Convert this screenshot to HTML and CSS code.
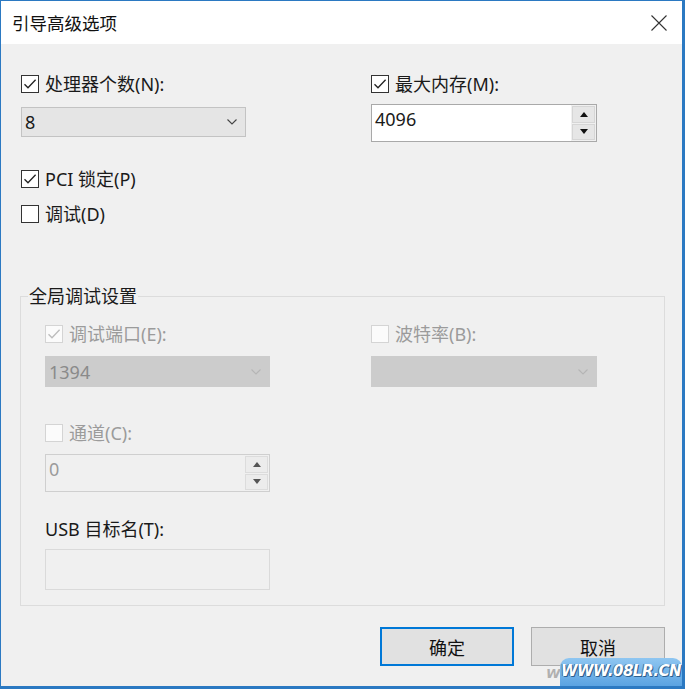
FILE: index.html
```html
<!DOCTYPE html>
<html lang="zh-CN">
<head>
<meta charset="utf-8">
<title>引导高级选项</title>
<link rel="stylesheet" href="styles.css">
</head>
<body>
<div class="window">
  <div class="titlebar">
    <span class="title">引导高级选项</span>
    <svg class="close" viewBox="0 0 16 16"><path d="M0.5 0.5L15.5 15.5M15.5 0.5L0.5 15.5" stroke="#333" stroke-width="1.1" fill="none"/></svg>
  </div>

  <div class="content">
    <div class="top-grid">
      <div class="col">
        <label class="check"><span class="box"><svg viewBox="0 0 14 14"><path d="M1.5 7.2L5 10.8L12.6 2.8" stroke="#222" stroke-width="1.3" fill="none"/></svg></span>处理器个数(N):</label>
        <div class="select sel-proc"><span>8</span><svg class="chev" viewBox="0 0 10 6"><path d="M0.5 0.5L5 5L9.5 0.5" stroke="#444" stroke-width="1.1" fill="none"/></svg></div>
        <label class="check pci"><span class="box"><svg viewBox="0 0 14 14"><path d="M1.5 7.2L5 10.8L12.6 2.8" stroke="#222" stroke-width="1.3" fill="none"/></svg></span>PCI 锁定(P)</label>
        <label class="check dbg"><span class="box"></span>调试(D)</label>
      </div>
      <div class="col">
        <label class="check"><span class="box"><svg viewBox="0 0 14 14"><path d="M1.5 7.2L5 10.8L12.6 2.8" stroke="#222" stroke-width="1.3" fill="none"/></svg></span>最大内存(M):</label>
        <div class="spin spin-mem">
          <span class="val">4096</span>
          <div class="btns">
            <span class="sbtn"><svg viewBox="0 0 8 5"><path d="M4 0L8 5H0Z" fill="#111"/></svg></span>
            <span class="sbtn"><svg viewBox="0 0 8 5"><path d="M0 0H8L4 5Z" fill="#111"/></svg></span>
          </div>
        </div>
      </div>
    </div>

    <fieldset class="group">
      <legend>全局调试设置</legend>
      <div class="group-inner">
        <div class="group-top">
          <div class="col">
            <label class="check disabled"><span class="box"><svg viewBox="0 0 14 14"><path d="M1.5 7.2L5 10.8L12.6 2.8" stroke="#bcbcbc" stroke-width="1.3" fill="none"/></svg></span>调试端口(E):</label>
            <div class="select dis sel-g"><span>1394</span><svg class="chev" viewBox="0 0 10 6"><path d="M0.5 0.5L5 5L9.5 0.5" stroke="#b5b5b5" stroke-width="1.1" fill="none"/></svg></div>
          </div>
          <div class="col">
            <label class="check disabled"><span class="box"></span>波特率(B):</label>
            <div class="select dis sel-g"><span></span><svg class="chev" viewBox="0 0 10 6"><path d="M0.5 0.5L5 5L9.5 0.5" stroke="#b5b5b5" stroke-width="1.1" fill="none"/></svg></div>
          </div>
        </div>
        <div class="col left-only">
          <label class="check disabled chan"><span class="box"></span>通道(C):</label>
          <div class="spin dis spin-chan">
            <span class="val">0</span>
            <div class="btns">
              <span class="sbtn"><svg viewBox="0 0 8 5"><path d="M4 0L8 5H0Z" fill="#555"/></svg></span>
              <span class="sbtn"><svg viewBox="0 0 8 5"><path d="M0 0H8L4 5Z" fill="#555"/></svg></span>
            </div>
          </div>
          <div class="field-label">USB 目标名(T):</div>
          <div class="textbox"></div>
        </div>
      </div>
    </fieldset>

    <div class="buttons">
      <button class="btn primary">确定</button>
      <button class="btn">取消</button>
    </div>
  </div>

  <span class="wm-ghost">W</span>
  <div class="watermark">WWW.08LR.CN</div>
</div>
</body>
</html>
```

FILE: styles.css
```css
* { box-sizing: border-box; }
html, body { margin: 0; padding: 0; }
body {
  width: 685px;
  height: 689px;
  font-family: "Noto Sans", "Noto Sans CJK SC", sans-serif;
  font-size: 18px;
  color: #1a1a1a;
  overflow: hidden;
}
.window {
  position: relative;
  width: 685px;
  height: 689px;
  background: #f0f0f0;
  border-style: solid;
  border-color: #2b79c2;
  border-width: 1px 3px 3px 1px;
  overflow: hidden;
}
.titlebar {
  height: 43px;
  background: #fff;
  display: flex;
  align-items: center;
  justify-content: space-between;
  padding: 0 15px 0 11px;
}
.title { font-size: 17.5px; line-height: 22px; color: #111; }
.close { width: 16px; height: 16px; display: block; }

.content { padding: 30px 17px 0 19px; }

.top-grid {
  display: grid;
  grid-template-columns: 225px 226px;
  column-gap: 125px;
  padding-left: 1px;
}
.col { display: flex; flex-direction: column; }

.check {
  display: flex;
  align-items: center;
  gap: 6px;
  height: 20px;
  line-height: 20px;
  white-space: nowrap;
  color: #1a1a1a;
}
.box {
  flex: none;
  width: 18px;
  height: 18px;
  border: 1px solid #333;
  background: #fff;
  display: flex;
  align-items: center;
  justify-content: center;
}
.box svg { width: 14px; height: 14px; display: block; }
.check.disabled { color: #9b9b9b; }
.check.disabled .box { border-color: #d4d4d4; background: #fbfbfb; }

.select {
  display: flex;
  align-items: center;
  justify-content: space-between;
  background: #e5e5e5;
  border: 1px solid #c3c3c3;
  padding: 0 8px 0 3px;
  line-height: 20px;
}
.select .chev { width: 10px; height: 6px; display: block; }
.sel-proc { margin-top: 13px; height: 30px; }
.select.dis { background: #cccccc; border-color: #cccccc; color: #8a8a8a; }
.sel-g { margin-top: 12px; height: 31px; }

.pci { margin-top: 32px; }
.dbg { margin-top: 15px; }

.spin {
  display: flex;
  align-items: stretch;
  background: #fff;
  border: 1px solid #a9a9a9;
  height: 38px;
}
.spin .val { flex: 1; padding: 3px 0 0 3px; line-height: 22px; }
.spin .btns {
  width: 25px;
  display: flex;
  flex-direction: column;
  gap: 1px;
  padding: 1px;
  background: #f0f0f0;
}
.sbtn {
  flex: 1;
  background: #e6e6e6;
  border: 1px solid #d6d6d6;
  display: flex;
  align-items: center;
  justify-content: center;
}
.sbtn svg { width: 8px; height: 5px; display: block; }
.spin-mem { margin-top: 10px; }
.spin.dis { background: #f0f0f0; border-color: #cfcfcf; color: #9b9b9b; }
.spin.dis .sbtn { background: #ececec; border-color: #dcdcdc; }
.spin-chan { margin-top: 11px; }

.group {
  margin: 61px 0 0 0;
  padding: 0;
  border: 1px solid #dcdcdc;
  min-width: 0;
}
.group legend {
  margin-left: 7px;
  padding: 0 1px;
  line-height: 22px;
  color: #1a1a1a;
}
.group-inner { padding: 17px 0 15px 24px; }
.group-top {
  display: grid;
  grid-template-columns: 225px 226px;
  column-gap: 101px;
}
.left-only { width: 225px; }
.chan { margin-top: 36px; }
.field-label { margin-top: 27px; height: 20px; line-height: 20px; white-space: nowrap; }
.textbox {
  margin-top: 10px;
  height: 41px;
  background: #f0f0f0;
  border: 1px solid #dadada;
}

.buttons {
  display: flex;
  justify-content: flex-end;
  gap: 17px;
  margin-top: 21px;
}
.btn {
  width: 134px;
  height: 39px;
  background: #e1e1e1;
  border: 1px solid #adadad;
  font-family: inherit;
  font-size: 18px;
  color: #111;
  padding: 0;
}
.btn.primary { border: 2px solid #0078d7; }

.wm-ghost {
  position: absolute;
  left: 545px;
  bottom: 4px;
  font-family: "DejaVu Sans", sans-serif;
  font-style: italic;
  font-weight: bold;
  font-size: 13px;
  line-height: 16px;
  color: #b0b0b0;
}
.watermark {
  position: absolute;
  right: 0;
  bottom: 0;
  width: 122px;
  height: 28px;
  border-radius: 9px 9px 0 0;
  background: linear-gradient(#8fc6f1, #5aa3e2);
  color: #fff;
  font-family: "DejaVu Sans", sans-serif;
  font-style: italic;
  font-weight: bold;
  font-size: 15px;
  line-height: 26px;
  text-align: center;
  letter-spacing: -0.5px;
  text-shadow: 1px 1px 0 #2e5f8e, -1px 0 0 #3a6fa0;
}
```
